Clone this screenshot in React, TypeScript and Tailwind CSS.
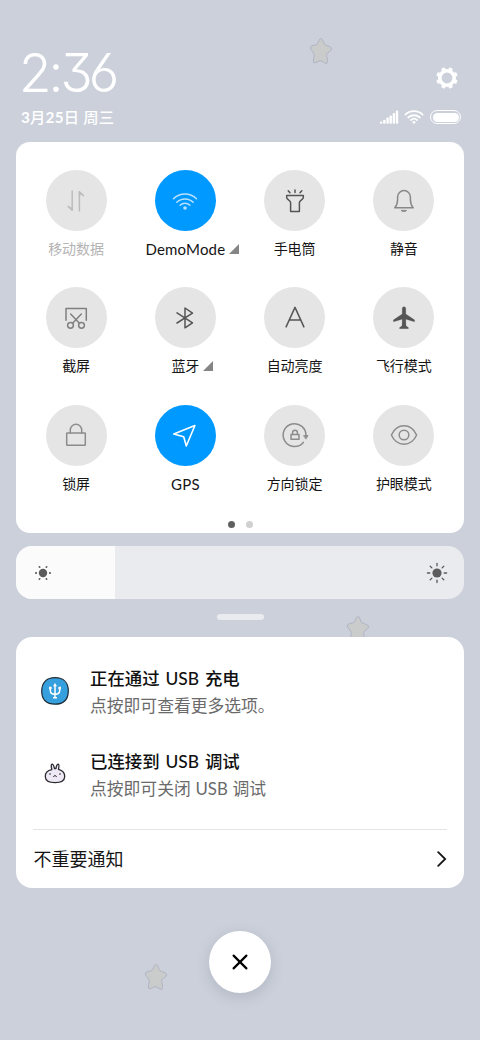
import type { ReactNode } from "react";

type Tile = {
  label: string;
  icon: ReactNode;
  color: string;
  bg: string;
  disabled?: boolean;
  expandable?: boolean;
};

const OFF = "bg-[#e5e5e5]";
const ON = "bg-[#0099ff]";

const tiles: Tile[] = [
  {
    label: "移动数据",
    color: "text-[#bcbcbc]",
    bg: OFF,
    disabled: true,
    icon: (
      <>
        <path d="M-3.8-10V9.2L-7.8 5.4" />
        <path d="M3.4 10V-9.2L7.4-5.4" />
        <path d="M-3.8 9.4L-6.6 6.4H-3.8ZM3.4-9.4L6.2-6.4H3.4Z" fill="currentColor" strokeWidth=".6" />
      </>
    ),
  },
  {
    label: "DemoMode",
    color: "text-[#b8e1ff]",
    bg: ON,
    expandable: true,
    icon: (
      <>
        <path d="M-11.5-2.2A16.3 16.3 0 0 1 11.5-2.2" />
        <path d="M-8.2 1.3A11.6 11.6 0 0 1 8.2 1.3" />
        <path d="M-4.9 4.3A7 7 0 0 1 4.9 4.3" />
        <circle cy="7" r="1.8" fill="currentColor" stroke="none" />
      </>
    ),
  },
  {
    label: "手电筒",
    color: "text-[#555]",
    bg: OFF,
    icon: (
      <>
        <path d="M0-11V-8.4M-6.8-10.3L-5-8.2M6.8-10.3L5-8.2" />
        <path d="M-8.3-5.4H8.3V-3.2C8.3-1.4 4.4-.6 4.4 1.6V10.6H-4.4V1.6C-4.4-.6-8.3-1.4-8.3-3.2Z" />
      </>
    ),
  },
  {
    label: "静音",
    color: "text-[#888]",
    bg: OFF,
    icon: (
      <>
        <path d="M-9.2 6.8C-7.2 4.6-6.4 2.6-6.4-1.5V-4A6.4 6.4 0 0 1 6.4-4V-1.5C6.4 2.6 7.2 4.6 9.2 6.8Z" />
        <path d="M-2.6 9.4H2.6L1.2 10.4H-1.2Z" strokeWidth="1" />
      </>
    ),
  },
  {
    label: "截屏",
    color: "text-[#808080]",
    bg: OFF,
    icon: (
      <>
        <path d="M-10 2.2V-9.4H10.3V2.2" />
        <path d="M-5.3-4L3.4 5.2M5.3-4L-3.4 5.2" />
        <circle cx="-5.5" cy="7.3" r="2.9" />
        <circle cx="5.5" cy="7.3" r="2.9" />
      </>
    ),
  },
  {
    label: "蓝牙",
    color: "text-[#555]",
    bg: OFF,
    expandable: true,
    icon: <path d="M-8-5.1L7.5 4.8L0 9.8V-10L7.5-4.9L-8 5" />,
  },
  {
    label: "自动亮度",
    color: "text-[#555]",
    bg: OFF,
    icon: <path d="M-8.9 8.9L0-10.6L8.9 8.9M-5.9 2H5.9" />,
  },
  {
    label: "飞行模式",
    color: "text-[#555]",
    bg: OFF,
    icon: (
      <path
        d="M0-11.2C1.2-11.2 1.8-10.4 1.8-9.2V-4L10.4 1.8C10.8 2.2 10.8 3.6 10.4 3.8L1.8 1.2L2 7.8L4.4 9.6V10.7H-4.4V9.6L-2 7.8L-1.8 1.2L-10.4 3.8C-10.8 3.6-10.8 2.2-10.4 1.8L-1.8-4V-9.2C-1.8-10.4-1.2-11.2 0-11.2Z"
        fill="currentColor"
        strokeWidth=".2"
      />
    ),
  },
  {
    label: "锁屏",
    color: "text-[#8c8c8c]",
    bg: OFF,
    icon: (
      <>
        <rect x="-9.3" y="-2" width="18.6" height="12.2" rx=".5" />
        <path d="M-5.7-2V-5A5.7 5.7 0 0 1 5.7-5V-2" />
      </>
    ),
  },
  {
    label: "GPS",
    color: "text-white",
    bg: ON,
    icon: <path d="M9.9-9.5L1.3 11L-1.3 1.8L-11.2-.9Z" strokeWidth="1.6" />,
  },
  {
    label: "方向锁定",
    color: "text-[#8c8c8c]",
    bg: OFF,
    icon: (
      <>
        <path d="M8.3 7.4A11.4 11.4 0 1 1 10.9 1" />
        <path d="M8.9.6H13.1L11 3.8Z" fill="currentColor" strokeWidth=".8" />
        <rect x="-4" y="-.4" width="8" height="4.6" />
        <path d="M-2.4-.4V-2.4A2.4 2.4 0 0 1 2.4-2.4V-.4" />
      </>
    ),
  },
  {
    label: "护眼模式",
    color: "text-[#8c8c8c]",
    bg: OFF,
    icon: (
      <>
        <path d="M-12.6 0C-10-5.8-5.4-9.2 0-9.2S10-5.8 12.6 0C10 5.8 5.4 9.2 0 9.2S-10 5.8-12.6 0Z" />
        <circle r="4.8" />
      </>
    ),
  },
];

function Glyph({ children, className = "" }: { children: ReactNode; className?: string }) {
  return (
    <svg
      viewBox="-15 -15 30 30"
      className={`size-[30px] ${className}`}
      fill="none"
      stroke="currentColor"
      strokeWidth="1.5"
      strokeLinecap="round"
      strokeLinejoin="round"
    >
      {children}
    </svg>
  );
}

function Star({ className }: { className: string }) {
  return (
    <svg viewBox="0 0 24 28" className={`absolute h-7 w-6 ${className}`}>
      <path
        d="M12 1.4C13.8 1.4 14.2 6 15.8 7.6C17.5 8.8 22.5 9.2 22.5 12C22.3 14.4 18.2 15.4 17.6 17.4C17.4 19.6 19.6 24.6 17.8 26.4C16 27.2 13.6 23.8 11.4 23.8C9.2 23.6 6.4 26.6 4.8 25.6C3.4 24.2 5.8 19.4 5.2 17.2C4.6 15 .8 12.6 1.4 10.2C2.2 7.8 6.2 8.8 8 7.4C9.4 5.8 10.2 1.4 12 1.4Z"
        fill="#cacccb"
        stroke="#b0b3c4"
        strokeWidth="1"
      />
    </svg>
  );
}

function StatusIcons() {
  return (
    <div className="flex items-center text-white">
      <svg viewBox="0 0 19 14" className="h-[14px] w-[19px]" fill="currentColor">
        <rect x="0" y="11.6" width="2.4" height="2.2" rx=".8" />
        <rect x="3.2" y="9.8" width="2.4" height="4" rx=".8" />
        <rect x="6.4" y="7.6" width="2.4" height="6.2" rx=".8" />
        <rect x="9.5" y="5.4" width="2.4" height="8.4" rx=".8" />
        <rect x="12.7" y="3.1" width="2.4" height="10.7" rx=".8" />
        <rect x="15.8" y=".6" width="2.4" height="13.2" rx=".8" />
      </svg>
      <svg
        viewBox="0 0 20 14"
        className="ml-[5px] h-[14px] w-5"
        fill="none"
        stroke="currentColor"
        strokeWidth="1.8"
        strokeLinecap="round"
      >
        <path d="M1.4 4.6A12.4 12.4 0 0 1 18.6 4.6M4.2 7.5A8.6 8.6 0 0 1 15.8 7.5M6.9 10A4.8 4.8 0 0 1 13.1 10" />
        <circle cx="10" cy="12.3" r="1.4" fill="currentColor" stroke="none" />
      </svg>
      <div className="ml-[6px] h-[14px] w-[31px] rounded-full border border-white p-[1.5px]">
        <div className="h-full rounded-full bg-white" />
      </div>
    </div>
  );
}

function Gear() {
  return (
    <svg viewBox="-12 -12 24 24" className="size-6 text-white" fill="none" stroke="currentColor">
      <circle r="7.2" strokeWidth="3.6" />
      {[22.5, 67.5, 112.5, 157.5, 202.5, 247.5, 292.5, 337.5].map((a) => (
        <path key={a} d="M-1.2-8V-10H1.2V-8Z" fill="currentColor" strokeWidth="1.6" strokeLinejoin="round" transform={`rotate(${a})`} />
      ))}
    </svg>
  );
}

function UsbIcon() {
  return (
    <svg viewBox="0 0 30 30" className="size-[30px]">
      <path
        d="M15 1.7C23.5 1.7 28.3 6.5 28.3 14.7C28.3 23.5 23.4 28.2 15 28.2C6.2 28.2 1.7 23.4 1.7 15.3C1.7 6.5 6.8 1.7 15 1.7Z"
        fill="#36a0de"
        stroke="#1d2b36"
        strokeWidth="1.2"
      />
      <g fill="none" stroke="#fff" strokeWidth="1.5">
        <path d="M15 9.5V22M10.3 12V14.6C10.3 17.4 12.6 18.4 15 18.4S19.7 17.4 19.7 14.6V12" />
      </g>
      <path d="M15 7L17 10.2H13ZM9 10.8H11.6V13.2H9ZM18.4 10.8H21V13.2H18.4ZM13 21H17V22.6H13Z" fill="#fff" />
    </svg>
  );
}

function BunnyIcon() {
  return (
    <svg viewBox="0 0 30 30" className="size-[30px]" strokeLinecap="round" strokeLinejoin="round">
      <path
        d="M11.8 10.6C11 7 11 5.3 12 5.1C13.3 5 14 7.3 14.5 9.5H16C16.2 7.2 17 5 18.2 5.2C19.3 5.5 19 8 18.5 10.4C23 11.6 24.9 14.4 24.7 17.8C24.5 21.8 21.5 23.7 15 23.7C8.5 23.7 5.5 21.8 5.3 17.8C5.1 14.2 7.4 11.4 11.8 10.6Z"
        fill="#eee9f5"
        stroke="#2c2930"
        strokeWidth="1.3"
      />
      <circle cx="10" cy="15" r=".8" fill="#222" />
      <circle cx="20" cy="15" r=".8" fill="#222" />
      <path d="M13.6 17.5L15 16.5L16.4 17.5" fill="none" stroke="#222" strokeWidth="1" />
    </svg>
  );
}

const notifications = [
  { title: "正在通过 USB 充电", text: "点按即可查看更多选项。", icon: <UsbIcon /> },
  { title: "已连接到 USB 调试", text: "点按即可关闭 USB 调试", icon: <BunnyIcon /> },
];

export default function App() {
  return (
    <div className="relative flex h-[1040px] w-[480px] flex-col overflow-hidden bg-[#cbd0da] px-4 font-[Lato,'Noto_Sans_CJK_SC',sans-serif]">
      <Star className="left-[309px] top-[37px]" />
      <Star className="left-[346px] top-[615px]" />
      <Star className="left-[144px] top-[963px]" />

      {/* HEADER */}
      <header className="flex h-[142px] shrink-0 items-start justify-between pl-[5px] pr-[3px] text-white">
        <div className="pt-[43px]">
          <div className="-ml-[2px] h-[60px] whitespace-nowrap font-[Inter] text-[53px] font-light leading-[60px] tracking-[-4px] [font-feature-settings:'cv09','cv03']">
            2<span className="ml-[1px] mr-[1px]">:</span>36
          </div>
          <div className="mt-[3px] whitespace-nowrap text-[15.3px] font-bold leading-[22px] tracking-[0.2px]">
            3<span className="font-medium">月</span>25<span className="font-medium">日 周三</span>
          </div>
        </div>
        <div className="flex flex-col items-end pt-[66px]">
          <div className="mr-[2.5px]">
            <Gear />
          </div>
          <div className="mt-5">
            <StatusIcons />
          </div>
        </div>
      </header>

      {/* QUICK SETTINGS */}
      <section className="h-[391px] shrink-0 rounded-[14px] bg-white px-[5.5px] pt-7">
        <div className="grid auto-rows-[117.3px] grid-cols-4">
          {tiles.map((tile) => (
            <div key={tile.label} className="flex flex-col items-center">
              <div className={`flex size-[61px] items-center justify-center rounded-full ${tile.bg} ${tile.color}`}>
                <Glyph>{tile.icon}</Glyph>
              </div>
              <div
                className={`relative mt-2 whitespace-nowrap text-[14px] leading-5 ${tile.disabled ? "text-[#b4b4b4]" : "text-[#151515]"}`}
              >
                <span className={/^[A-Z]/.test(tile.label) ? "text-[15px] tracking-[0.2px]" : ""}>{tile.label}</span>
                {tile.expandable && (
                  <svg viewBox="0 0 10 10" className="absolute left-full top-[5px] ml-1 size-[10px]">
                    <path d="M10 0V10H0Z" fill="#858585" />
                  </svg>
                )}
              </div>
            </div>
          ))}
        </div>
        <div className="-mt-[1px] flex justify-center gap-[11px]">
          <span className="size-[7px] rounded-full bg-[#606060]" />
          <span className="size-[7px] rounded-full bg-[#d0d0d0]" />
        </div>
      </section>

      {/* BRIGHTNESS */}
      <div className="mt-[13px] flex h-[53px] shrink-0 overflow-hidden rounded-[16px] bg-[#eaebef] text-[#5c5c5c]">
        <div className="flex w-[99px] items-center bg-[#fbfbfb] pl-3">
          <Glyph>
            <circle r="4.2" fill="currentColor" stroke="none" />
            {[0, 60, 120, 180, 240, 300].map((a) => (
              <path key={a} d="M6.8 0H7.1" strokeWidth="1.8" transform={`rotate(${a})`} />
            ))}
          </Glyph>
        </div>
        <div className="flex flex-1 items-center justify-end pr-3">
          <Glyph>
            <circle r="4.6" fill="currentColor" stroke="none" />
            {[0, 45, 90, 135, 180, 225, 270, 315].map((a) => (
              <path key={a} d="M7.2 0H9.6" strokeWidth="1.3" transform={`rotate(${a})`} />
            ))}
          </Glyph>
        </div>
      </div>

      <div className="mx-auto mt-[15px] h-[6px] w-[47px] shrink-0 rounded-[3px] bg-[#eaebef]" />

      {/* NOTIFICATIONS */}
      <section className="relative mt-[17px] flex h-[251px] shrink-0 flex-col rounded-[16px] bg-white px-[17px] pt-7">
        {notifications.map((n) => (
          <div key={n.title} className="flex h-[82.5px] items-start">
            <div className="ml-[7px] mt-[11px]">{n.icon}</div>
            <div className="ml-5 whitespace-nowrap">
              <div className="text-[17.4px] font-medium leading-[27px] text-[#101010] [word-spacing:1.5px]">{n.title}</div>
              <div className="text-[16.8px] leading-[27px] text-[#6a6a6a] [word-spacing:0.5px]">{n.text}</div>
            </div>
          </div>
        ))}
        <div className="-mt-px flex flex-1 items-center justify-between border-t border-[#e4e4e4] text-[18px] text-[#151515]">
          <span className="ml-[0.5px]">不重要通知</span>
          <svg viewBox="0 0 10 16" className="h-4 w-[10px]" fill="none" stroke="currentColor" strokeWidth="1.8">
            <path d="M1.2 1.2L8.2 8L1.2 14.8" strokeLinecap="round" />
          </svg>
        </div>
      </section>

      <button className="mx-auto mt-[43px] flex size-[62px] shrink-0 items-center justify-center rounded-full bg-white text-black shadow-[0_4px_14px_rgba(90,100,125,0.22)]">
        <svg viewBox="0 0 16 16" className="size-4" stroke="currentColor" strokeWidth="2.2" strokeLinecap="round">
          <path d="M1.6 1.6L14.4 14.4M14.4 1.6L1.6 14.4" />
        </svg>
      </button>
    </div>
  );
}
